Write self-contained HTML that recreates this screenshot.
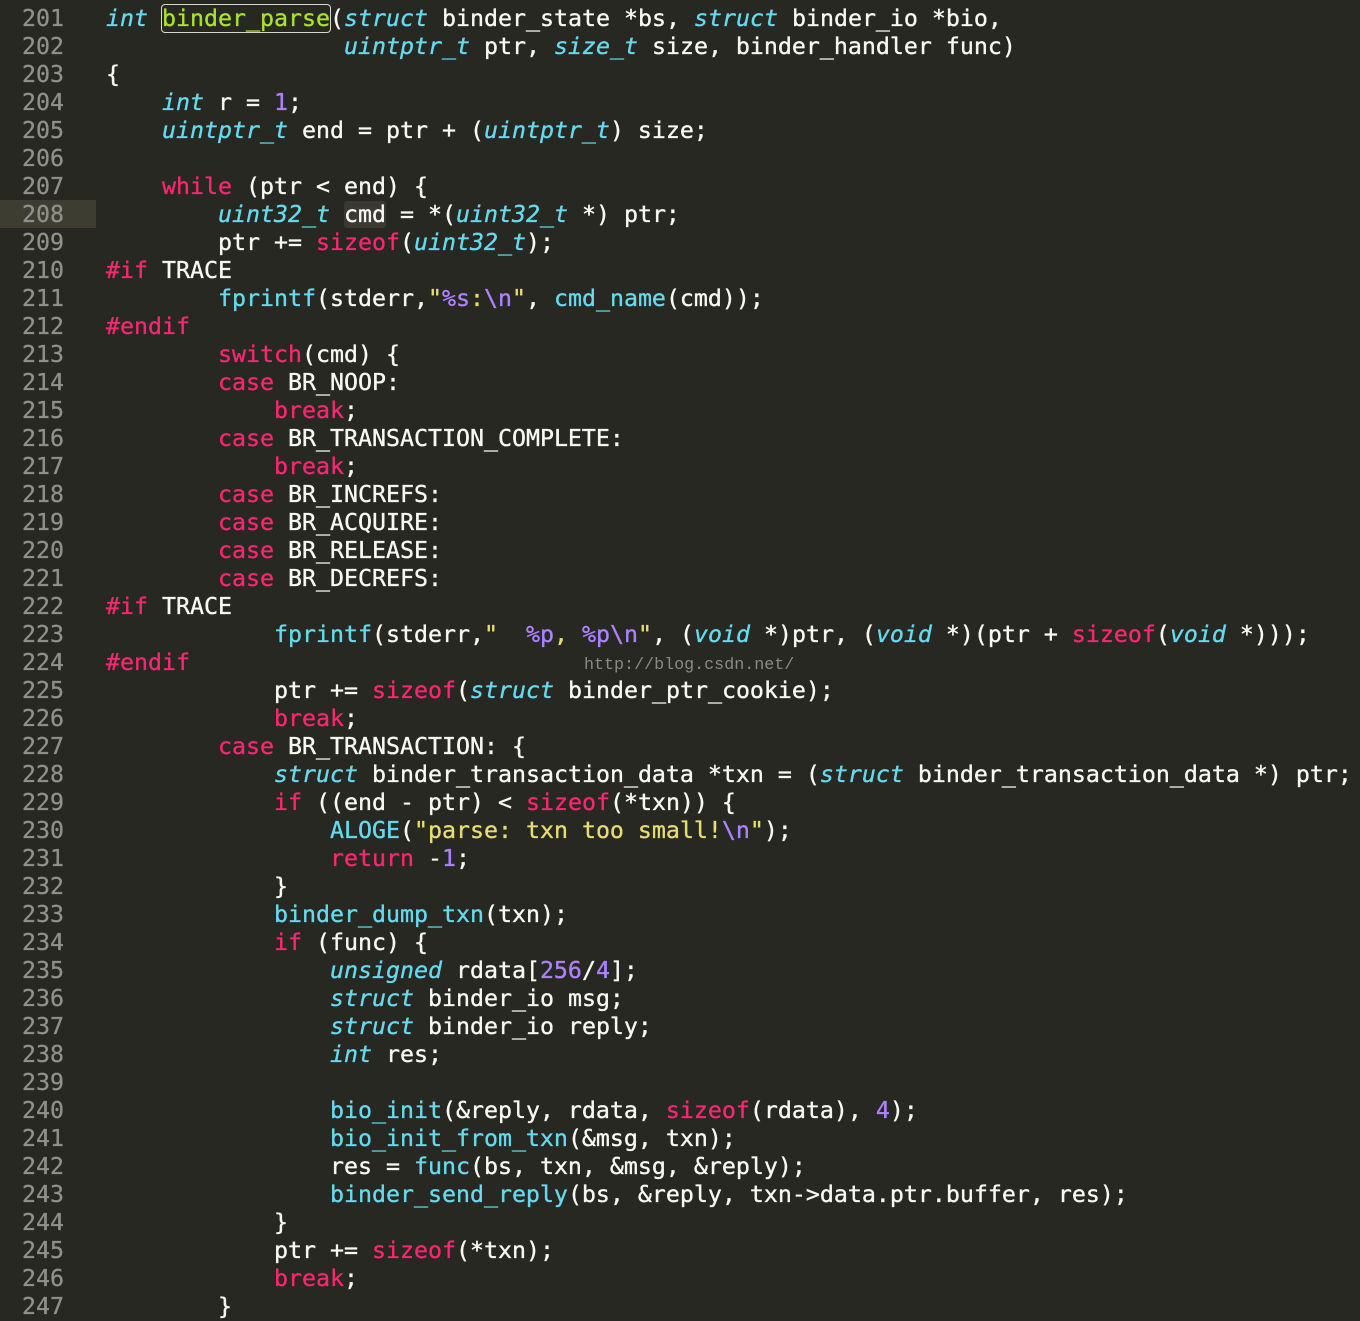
<!DOCTYPE html>
<html><head><meta charset="utf-8"><style>
body{margin:0;background:#272822;width:1360px;height:1314px;overflow:hidden;position:relative;font-family:"DejaVu Sans Mono","Liberation Mono",monospace;font-size:23.25px;}
.hl{position:absolute;left:0;top:200px;width:96px;height:28px;background:#3e3d32;}
.g{position:absolute;left:0;top:5px;width:64px;text-align:right;color:#8f908a;line-height:28px;white-space:pre;-webkit-text-stroke:0.3px #8f908a;}
.c{position:absolute;left:106px;top:5px;color:#f8f8f2;line-height:28px;white-space:pre;-webkit-text-stroke:0.35px currentColor;}
.k{color:#f92672}.t{color:#66d9ef;font-style:italic}.f{color:#66d9ef}.n{color:#ae81ff}.s{color:#e6db74}.gr{color:#a6e22e}
.box{outline:1.5px solid #d8d8c8;border-radius:3px}
.cm{background:#3a3a33;border-radius:3px}
.wm{position:absolute;left:584px;top:656px;font-family:"Liberation Mono",monospace;font-size:16.7px;color:#8a8a82;}
</style></head><body>
<div class="hl"></div>
<div class="g">201
202
203
204
205
206
207
208
209
210
211
212
213
214
215
216
217
218
219
220
221
222
223
224
225
226
227
228
229
230
231
232
233
234
235
236
237
238
239
240
241
242
243
244
245
246
247</div>
<div class="c"><span class="t">int</span> <span class="gr box">binder_parse</span>(<span class="t">struct</span> binder_state *bs, <span class="t">struct</span> binder_io *bio,
                 <span class="t">uintptr_t</span> ptr, <span class="t">size_t</span> size, binder_handler func)
{
    <span class="t">int</span> r = <span class="n">1</span>;
    <span class="t">uintptr_t</span> end = ptr + (<span class="t">uintptr_t</span>) size;

    <span class="k">while</span> (ptr &lt; end) {
        <span class="t">uint32_t</span> <span class="cm">cmd</span> = *(<span class="t">uint32_t</span> *) ptr;
        ptr += <span class="k">sizeof</span>(<span class="t">uint32_t</span>);
<span class="k">#if</span> TRACE
        <span class="f">fprintf</span>(stderr,<span class="s">"</span><span class="n">%s</span><span class="s">:</span><span class="n">\n</span><span class="s">"</span>, <span class="f">cmd_name</span>(cmd));
<span class="k">#endif</span>
        <span class="k">switch</span>(cmd) {
        <span class="k">case</span> BR_NOOP:
            <span class="k">break</span>;
        <span class="k">case</span> BR_TRANSACTION_COMPLETE:
            <span class="k">break</span>;
        <span class="k">case</span> BR_INCREFS:
        <span class="k">case</span> BR_ACQUIRE:
        <span class="k">case</span> BR_RELEASE:
        <span class="k">case</span> BR_DECREFS:
<span class="k">#if</span> TRACE
            <span class="f">fprintf</span>(stderr,<span class="s">"  </span><span class="n">%p</span><span class="s">, </span><span class="n">%p\n</span><span class="s">"</span>, (<span class="t">void</span> *)ptr, (<span class="t">void</span> *)(ptr + <span class="k">sizeof</span>(<span class="t">void</span> *)));
<span class="k">#endif</span>
            ptr += <span class="k">sizeof</span>(<span class="t">struct</span> binder_ptr_cookie);
            <span class="k">break</span>;
        <span class="k">case</span> BR_TRANSACTION: {
            <span class="t">struct</span> binder_transaction_data *txn = (<span class="t">struct</span> binder_transaction_data *) ptr;
            <span class="k">if</span> ((end - ptr) &lt; <span class="k">sizeof</span>(*txn)) {
                <span class="f">ALOGE</span>(<span class="s">"parse: txn too small!</span><span class="n">\n</span><span class="s">"</span>);
                <span class="k">return</span> -<span class="n">1</span>;
            }
            <span class="f">binder_dump_txn</span>(txn);
            <span class="k">if</span> (func) {
                <span class="t">unsigned</span> rdata[<span class="n">256</span>/<span class="n">4</span>];
                <span class="t">struct</span> binder_io msg;
                <span class="t">struct</span> binder_io reply;
                <span class="t">int</span> res;

                <span class="f">bio_init</span>(&amp;reply, rdata, <span class="k">sizeof</span>(rdata), <span class="n">4</span>);
                <span class="f">bio_init_from_txn</span>(&amp;msg, txn);
                res = <span class="f">func</span>(bs, txn, &amp;msg, &amp;reply);
                <span class="f">binder_send_reply</span>(bs, &amp;reply, txn-&gt;data.ptr.buffer, res);
            }
            ptr += <span class="k">sizeof</span>(*txn);
            <span class="k">break</span>;
        }</div>
<div class="wm">http://blog.csdn.net/</div>
</body></html>
